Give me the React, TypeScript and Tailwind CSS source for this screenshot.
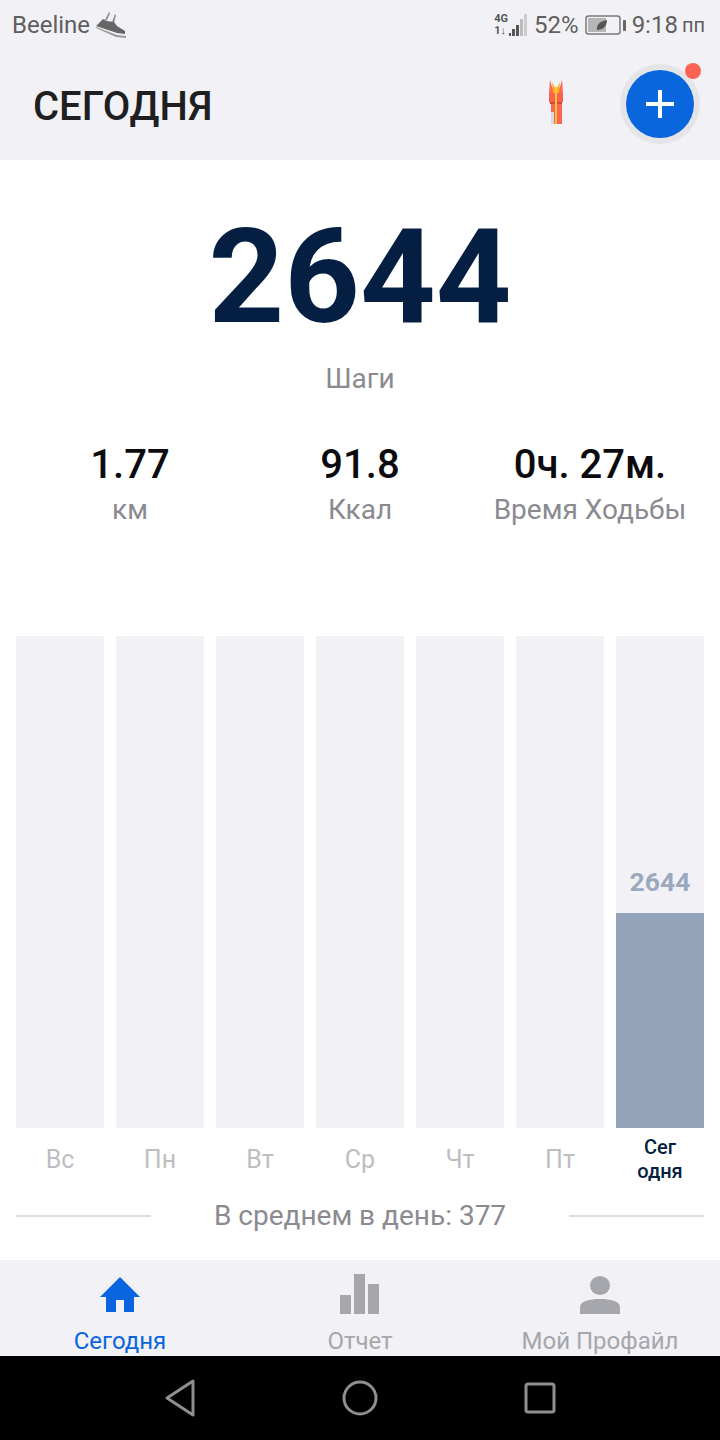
const days = ['Вс', 'Пн', 'Вт', 'Ср', 'Чт', 'Пт'];

const stats = [
  { value: '1.77', label: 'км' },
  { value: '91.8', label: 'Ккал' },
  { value: '0ч. 27м.', label: 'Время Ходьбы' },
];

const ShoeIcon = () => (
  <svg width="32" height="28" viewBox="0 0 32 28" className="ml-[5px]">
    <path d="M10 9 L14 1 L15 2 L12 9 Z M17 11 L20 3 L21 4 L19 12 Z" fill="#8a8a8a" />
    <path d="M1 15 L8 8 L12 10 L19 11 L22 15 L30 20 L30 23 L22 22 Z" fill="#666666" />
    <path d="M1 16 L22 24 L31 25 L31 27 L21 26 L1 17 Z" fill="#9a9a9a" />
  </svg>
);

const SignalIcon = () => (
  <div className="flex items-end gap-[1px] h-[22px] ml-[1px]">
    <div className="w-[2px] h-[3px] bg-[#555]" />
    <div className="w-[3px] h-[7px] bg-[#555]" />
    <div className="w-[3px] h-[11px] bg-[#555]" />
    <div className="w-[3px] h-[17px] bg-[#bbb]" />
    <div className="w-[3px] h-[22px] bg-[#ccc]" />
  </div>
);

const BatteryIcon = () => (
  <svg width="41" height="20" viewBox="0 0 41 20">
    <rect x="1" y="1" width="34" height="18" rx="2.5" fill="none" stroke="#7a7a7a" strokeWidth="1.5" />
    <rect x="3" y="3" width="18" height="14" fill="#b5b5b5" />
    <path d="M12 15 C11 9 16 6 22 5 C22 11 18 15 12 15 Z" fill="#555555" />
    <rect x="38" y="5" width="3" height="11" rx="1" fill="#666666" />
  </svg>
);

const TorchIcon = () => (
  <svg width="16" height="46" viewBox="0 0 16 46">
    <path d="M2 1 L4 8 L8 14 L12 8 L14 1 L15 14 L1 14 Z" fill="#fb6553" />
    <path d="M4 3 L8 11 L12 3 L11 14 H5 Z" fill="#f7b21c" />
    <path d="M1 14 H15 V23 H1 Z" fill="#f9614f" />
    <path d="M2 23 H14 V25 H2 Z" fill="#d9483d" />
    <path d="M3 25 H14 V45 H3 Z" fill="#fb6553" />
    <path d="M7 8 H9 V45 H7 Z" fill="#fdc62f" />
    <path d="M3 33 H6 V45 H3 Z" fill="#d8d8e2" />
  </svg>
);

const HomeIcon = () => (
  <svg width="40" height="36" viewBox="0 0 40 36">
    <path d="M20 1 L40 21 H34 V36 H24 V24 H16 V36 H6 V21 H0 Z" fill="#0a66e0" />
  </svg>
);

const ChartIcon = () => (
  <svg width="40" height="40" viewBox="0 0 40 40">
    <path d="M0 21 H11 V40 H0 Z M14 0 H25 V40 H14 Z M28 10 H39 V40 H28 Z" fill="#a6a6ad" />
  </svg>
);

const UserIcon = () => (
  <svg width="40" height="38" viewBox="0 0 40 38">
    <ellipse cx="20" cy="9.5" rx="10" ry="9.5" fill="#a6a6ad" />
    <path d="M0 38 V31 C0 25 10 23 20 23 C30 23 40 25 40 31 V38 Z" fill="#a6a6ad" />
  </svg>
);

export default function App() {
  return (
    <div className="w-[720px] h-[1440px] flex flex-col bg-white overflow-hidden font-['Roboto',sans-serif]">
      {/* status bar + title */}
      <div className="h-[160px] shrink-0 bg-[#f2f1f5]">
        <div className="h-[50px] flex items-center justify-between pl-[12px] pr-[15px] text-[#5f5f5f]">
          <div className="flex items-center">
            <span className="text-[24px] leading-none">Beeline</span>
            <ShoeIcon />
          </div>
          <div className="flex items-center">
            <div className="flex flex-col items-start text-[11px] leading-[12px] font-bold text-[#555]">
              <span>4G</span>
              <span>1↓</span>
            </div>
            <SignalIcon />
            <span className="text-[24px] leading-none ml-[7px]">52%</span>
            <div className="ml-[6px] flex items-center"><BatteryIcon /></div>
            <span className="text-[24px] leading-none ml-[6px]">9:18</span>
            <span className="text-[20px] leading-none ml-[4px]">пп</span>
          </div>
        </div>
        <div className="h-[110px] flex items-center pl-[33px] pr-[26px]">
          <h1 className="text-[40px] leading-none font-medium text-[#1f1f22] flex-1 pt-[3px]">СЕГОДНЯ</h1>
          <div className="mr-[56px] mb-[6px]"><TorchIcon /></div>
          <div className="relative w-[80px] h-[80px] rounded-full bg-[#e4e4e9] flex items-center justify-center mb-[3px] -mr-[6px]">
            <div className="w-[68px] h-[68px] rounded-full bg-[#0a66dc] flex items-center justify-center">
              <svg width="28" height="28" viewBox="0 0 28 28">
                <path d="M12 0 H16 V12 H28 V16 H16 V28 H12 V16 H0 V12 H12 Z" fill="#ffffff" />
              </svg>
            </div>
            <div className="absolute top-[-1px] right-[-1px] w-[16px] h-[16px] rounded-full bg-[#fb6355]" />
          </div>
        </div>
      </div>

      {/* steps */}
      <div className="flex flex-col items-center mt-[42px]">
        <div className="text-[132px] leading-[150px] font-bold text-[#051f42]">2644</div>
        <div className="text-[28px] leading-[30px] text-[#8a8a90] mt-[12px]">Шаги</div>
      </div>

      {/* stats */}
      <div className="flex mt-[48px] px-[15px]">
        {stats.map((s) => (
          <div key={s.label} className="flex-1 flex flex-col items-center">
            <div className="text-[40px] leading-[46px] font-medium text-[#0b0b0f]">{s.value}</div>
            <div className="text-[28px] leading-[30px] text-[#8a8a90] mt-[7px]">{s.label}</div>
          </div>
        ))}
      </div>

      {/* week chart */}
      <div className="flex gap-[12px] px-[16px] mt-[111px]">
        {days.map((d) => (
          <div key={d} className="flex-1 flex flex-col">
            <div className="h-[492px] bg-[#f2f1f5]" />
            <div className="h-[62px] flex items-center justify-center pt-[2px] text-[25px] text-[#bdbdc2]">{d}</div>
          </div>
        ))}
        <div className="flex-1 flex flex-col">
          <div className="h-[492px] bg-[#f2f1f5] flex flex-col justify-end">
            <div className="text-[26.5px] leading-[32px] font-bold text-[#9aa9bf] text-center mb-[15px]">2644</div>
            <div className="h-[215px] bg-[#94a4ba]" />
          </div>
          <div className="h-[62px] flex flex-col items-center justify-center text-[20px] leading-[24px] font-medium text-[#051f42] text-center">
            <span>Сег</span>
            <span>одня</span>
          </div>
        </div>
      </div>

      {/* average */}
      <div className="flex items-center px-[16px] h-[50px] mt-[1px]">
        <div className="w-[135px] h-[2px] bg-[#dcdce0]" />
        <div className="flex-1 text-center text-[28px] text-[#8a8a90]">В среднем в день: 377</div>
        <div className="w-[135px] h-[2px] bg-[#dcdce0]" />
      </div>

      {/* tab bar */}
      <div className="mt-auto">
        <div className="h-[96px] bg-[#f2f1f5] flex">
          <div className="flex-1 flex flex-col items-center pt-[15px] text-[#0a66dc]">
            <div className="h-[38px] flex items-center"><HomeIcon /></div>
            <span className="text-[24px] leading-[28px] mt-[14px]">Сегодня</span>
          </div>
          <div className="flex-1 flex flex-col items-center pt-[13px] text-[#a6a6ad]">
            <div className="h-[42px] flex items-center"><ChartIcon /></div>
            <span className="text-[24px] leading-[28px] mt-[12px]">Отчет</span>
          </div>
          <div className="flex-1 flex flex-col items-center pt-[14px] text-[#a6a6ad]">
            <div className="h-[41px] flex items-center"><UserIcon /></div>
            <span className="text-[24px] leading-[28px] mt-[12px]">Мой Профайл</span>
          </div>
        </div>
        {/* android nav */}
        <div className="h-[84px] bg-black flex items-center justify-center gap-[146px]">
          <svg width="32" height="38" viewBox="0 0 32 38" fill="none" stroke="#8f8f8f" strokeWidth="3" strokeLinejoin="round">
            <path d="M29 2 V36 L3 19 Z" />
          </svg>
          <svg width="36" height="36" viewBox="0 0 36 36" fill="none" stroke="#8f8f8f" strokeWidth="3">
            <circle cx="18" cy="18" r="16" />
          </svg>
          <svg width="32" height="32" viewBox="0 0 32 32" fill="none" stroke="#8f8f8f" strokeWidth="3" strokeLinejoin="round">
            <rect x="2" y="2" width="28" height="28" rx="2" />
          </svg>
        </div>
      </div>
    </div>
  );
}
